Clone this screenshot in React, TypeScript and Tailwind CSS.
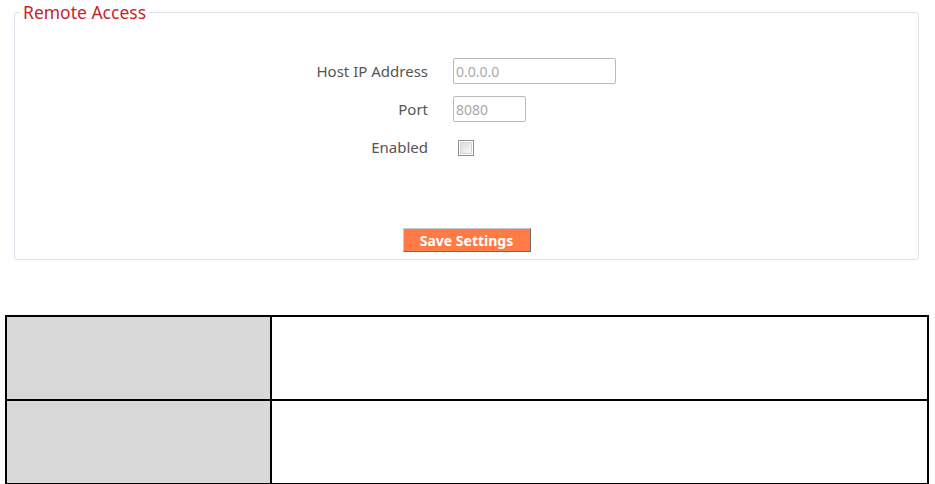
import React from "react";

const font = { fontFamily: '"Noto Sans", "Open Sans", sans-serif' };

function Field({ label, children }: { label: string; children: React.ReactNode }) {
  return (
    <>
      <div className="flex h-[26px] items-center justify-end text-[15px] text-[#555]">{label}</div>
      <div className="flex h-[26px] items-center">{children}</div>
    </>
  );
}

export default function App() {
  return (
    <div className="h-[484px] w-[935px] bg-white" style={font}>
      {/* Remote Access panel */}
      <fieldset className="ml-[14px] mt-[2px] h-[258px] w-[905px] rounded-[3px] border border-[#dbe2ea] px-0 pb-0 pt-0">
        <legend className="ml-[5px] px-[3px] text-[17.5px] leading-[20px] text-[#c4262b]">Remote Access</legend>
        <div className="mt-[36px] grid grid-cols-[413px_auto] gap-x-[25px] gap-y-[12px]">
          <Field label="Host IP Address">
            <input
              readOnly
              value="0.0.0.0"
              className="h-[26px] w-[163px] rounded-[2px] border border-[#b9b9b9] px-[2px] text-[14px] text-[#a9a9a9] outline-none"
            />
          </Field>
          <Field label="Port">
            <input
              readOnly
              value="8080"
              className="h-[26px] w-[73px] rounded-[2px] border border-[#b9b9b9] px-[2px] text-[14px] text-[#a9a9a9] outline-none"
            />
          </Field>
          <Field label="Enabled">
            <span className="ml-[5px] mt-[2px] flex h-[16px] w-[16px] items-center justify-center border border-[#8e8e8e] bg-white">
              <span className="h-[12px] w-[12px] border border-[#d6d6d6] bg-gradient-to-br from-[#dcdcdc] to-[#f8f8f8]" />
            </span>
          </Field>
        </div>
        <div className="mt-[68px] flex justify-center">
          <button className="h-[24px] w-[128px] border border-b-[#6b6b6b] border-l-[#c8c8c8] border-r-[#6b6b6b] border-t-[#c8c8c8] bg-[#ff7a45] text-[14px] font-bold text-white">
            Save Settings
          </button>
        </div>
      </fieldset>

      {/* description table */}
      <table className="ml-[5px] mt-[55px] w-[924px] border-collapse">
        <tbody>
          <tr className="h-[84px]">
            <td className="w-[265px] border-2 border-black bg-[#d9d9d9]" />
            <td className="border-2 border-black" />
          </tr>
          <tr className="h-[84px]">
            <td className="w-[265px] border-2 border-black bg-[#d9d9d9]" />
            <td className="border-2 border-black" />
          </tr>
        </tbody>
      </table>
    </div>
  );
}
